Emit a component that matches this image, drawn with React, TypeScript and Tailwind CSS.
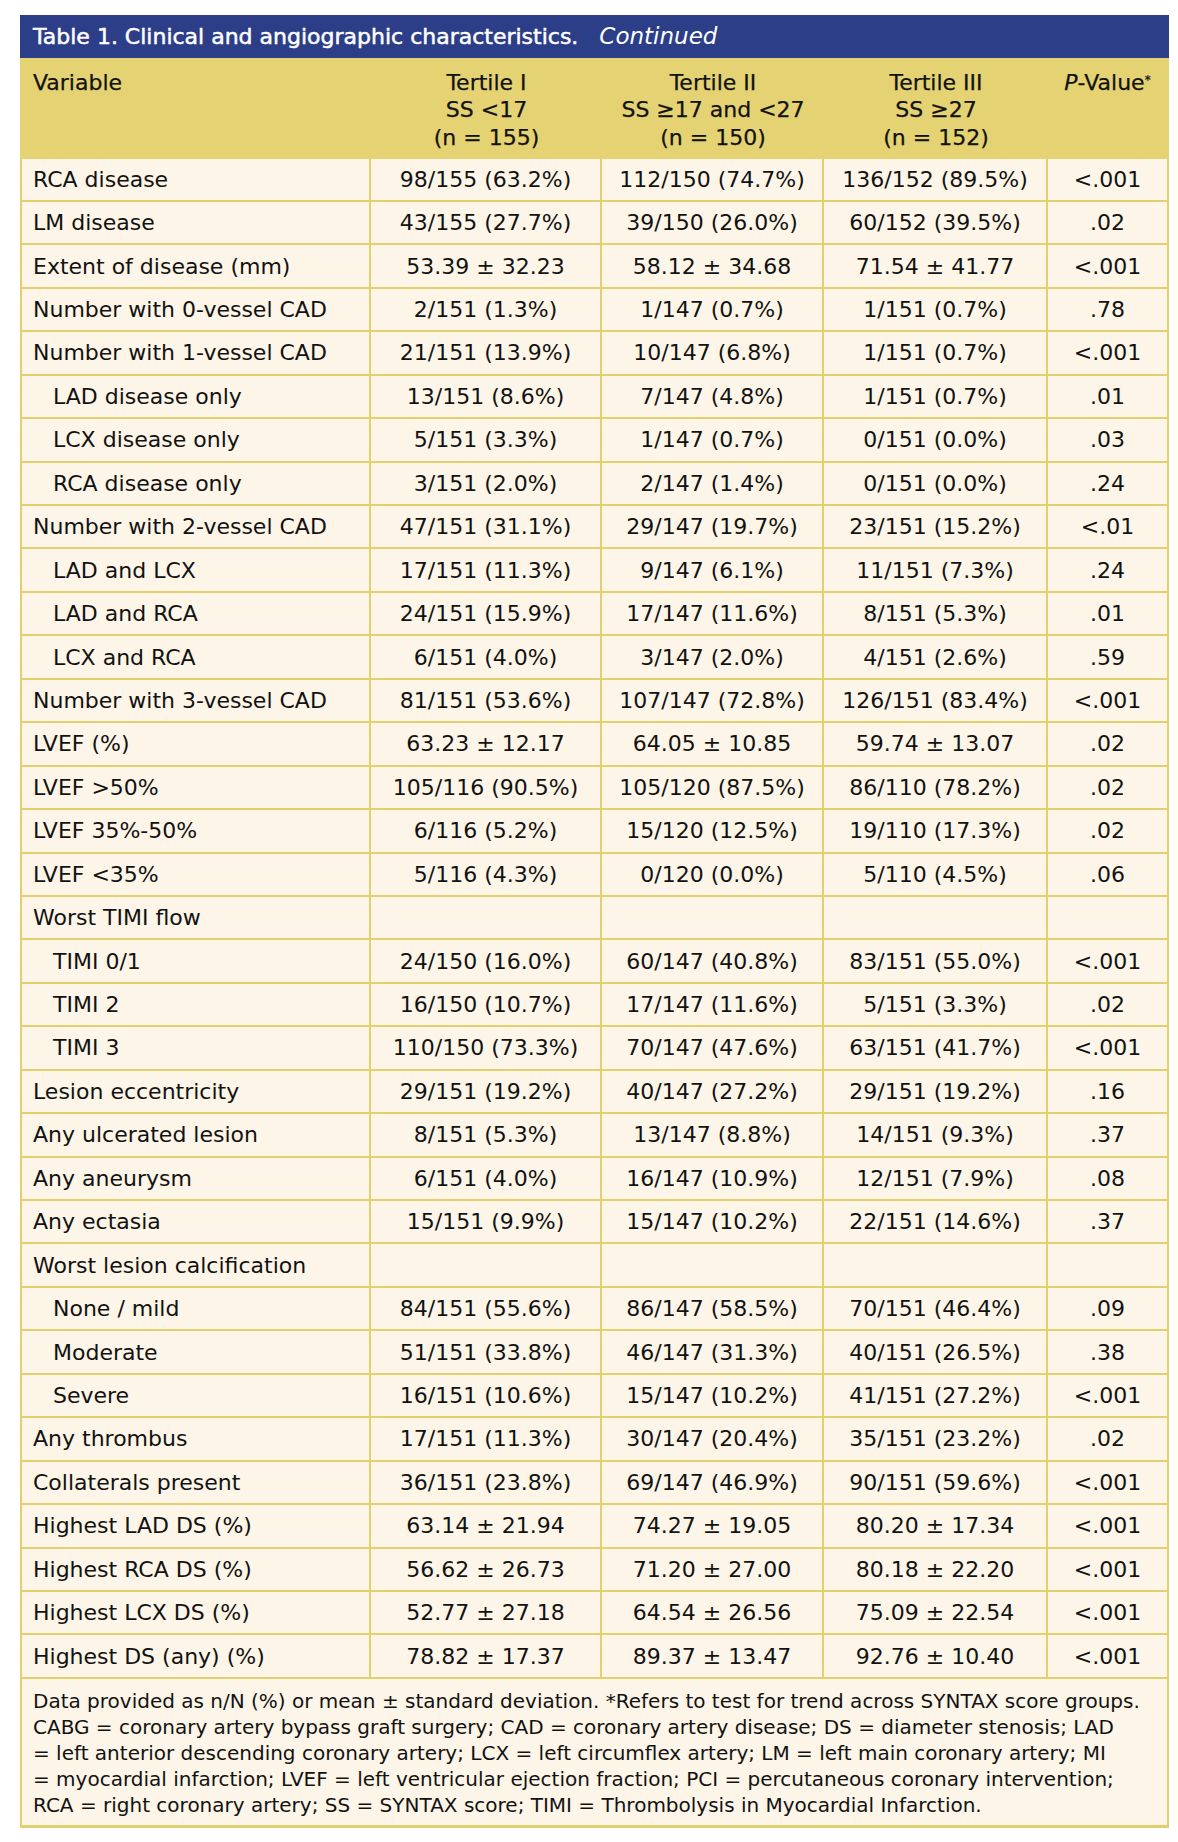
import React from 'react';

type Row = [string, string, string, string, string, boolean?];

const rows: Row[] = [
    ['RCA disease', '98/155 (63.2%)', '112/150 (74.7%)', '136/152 (89.5%)', '<.001'],
    ['LM disease', '43/155 (27.7%)', '39/150 (26.0%)', '60/152 (39.5%)', '.02'],
    ['Extent of disease (mm)', '53.39 ± 32.23', '58.12 ± 34.68', '71.54 ± 41.77', '<.001'],
    ['Number with 0-vessel CAD', '2/151 (1.3%)', '1/147 (0.7%)', '1/151 (0.7%)', '.78'],
    ['Number with 1-vessel CAD', '21/151 (13.9%)', '10/147 (6.8%)', '1/151 (0.7%)', '<.001'],
    ['LAD disease only', '13/151 (8.6%)', '7/147 (4.8%)', '1/151 (0.7%)', '.01', true],
    ['LCX disease only', '5/151 (3.3%)', '1/147 (0.7%)', '0/151 (0.0%)', '.03', true],
    ['RCA disease only', '3/151 (2.0%)', '2/147 (1.4%)', '0/151 (0.0%)', '.24', true],
    ['Number with 2-vessel CAD', '47/151 (31.1%)', '29/147 (19.7%)', '23/151 (15.2%)', '<.01'],
    ['LAD and LCX', '17/151 (11.3%)', '9/147 (6.1%)', '11/151 (7.3%)', '.24', true],
    ['LAD and RCA', '24/151 (15.9%)', '17/147 (11.6%)', '8/151 (5.3%)', '.01', true],
    ['LCX and RCA', '6/151 (4.0%)', '3/147 (2.0%)', '4/151 (2.6%)', '.59', true],
    ['Number with 3-vessel CAD', '81/151 (53.6%)', '107/147 (72.8%)', '126/151 (83.4%)', '<.001'],
    ['LVEF (%)', '63.23 ± 12.17', '64.05 ± 10.85', '59.74 ± 13.07', '.02'],
    ['LVEF >50%', '105/116 (90.5%)', '105/120 (87.5%)', '86/110 (78.2%)', '.02'],
    ['LVEF 35%-50%', '6/116 (5.2%)', '15/120 (12.5%)', '19/110 (17.3%)', '.02'],
    ['LVEF <35%', '5/116 (4.3%)', '0/120 (0.0%)', '5/110 (4.5%)', '.06'],
    ['Worst TIMI flow', '', '', '', ''],
    ['TIMI 0/1', '24/150 (16.0%)', '60/147 (40.8%)', '83/151 (55.0%)', '<.001', true],
    ['TIMI 2', '16/150 (10.7%)', '17/147 (11.6%)', '5/151 (3.3%)', '.02', true],
    ['TIMI 3', '110/150 (73.3%)', '70/147 (47.6%)', '63/151 (41.7%)', '<.001', true],
    ['Lesion eccentricity', '29/151 (19.2%)', '40/147 (27.2%)', '29/151 (19.2%)', '.16'],
    ['Any ulcerated lesion', '8/151 (5.3%)', '13/147 (8.8%)', '14/151 (9.3%)', '.37'],
    ['Any aneurysm', '6/151 (4.0%)', '16/147 (10.9%)', '12/151 (7.9%)', '.08'],
    ['Any ectasia', '15/151 (9.9%)', '15/147 (10.2%)', '22/151 (14.6%)', '.37'],
    ['Worst lesion calcification', '', '', '', ''],
    ['None / mild', '84/151 (55.6%)', '86/147 (58.5%)', '70/151 (46.4%)', '.09', true],
    ['Moderate', '51/151 (33.8%)', '46/147 (31.3%)', '40/151 (26.5%)', '.38', true],
    ['Severe', '16/151 (10.6%)', '15/147 (10.2%)', '41/151 (27.2%)', '<.001', true],
    ['Any thrombus', '17/151 (11.3%)', '30/147 (20.4%)', '35/151 (23.2%)', '.02'],
    ['Collaterals present', '36/151 (23.8%)', '69/147 (46.9%)', '90/151 (59.6%)', '<.001'],
    ['Highest LAD DS (%)', '63.14 ± 21.94', '74.27 ± 19.05', '80.20 ± 17.34', '<.001'],
    ['Highest RCA DS (%)', '56.62 ± 26.73', '71.20 ± 27.00', '80.18 ± 22.20', '<.001'],
    ['Highest LCX DS (%)', '52.77 ± 27.18', '64.54 ± 26.56', '75.09 ± 22.54', '<.001'],
    ['Highest DS (any) (%)', '78.82 ± 17.37', '89.37 ± 13.47', '92.76 ± 10.40', '<.001'],
];

const footnote = [
    'Data provided as n/N (%) or mean ± standard deviation. *Refers to test for trend across SYNTAX score groups.',
    'CABG = coronary artery bypass graft surgery; CAD = coronary artery disease; DS = diameter stenosis; LAD',
    '= left anterior descending coronary artery; LCX = left circumflex artery; LM = left main coronary artery; MI',
    '= myocardial infarction; LVEF = left ventricular ejection fraction; PCI = percutaneous coronary intervention;',
    'RCA = right coronary artery; SS = SYNTAX score; TIMI = Thrombolysis in Myocardial Infarction.',
];

const cols = 'grid grid-cols-[349px_231px_222px_224px_1fr]';

const App: React.FC = () => {
    return (
        <div className="min-h-[1842px] bg-white pt-[15px] pl-[20px] font-['DejaVu_Sans',sans-serif] text-[#121212]">
            <div className="w-[1149px]">
                {/* Title bar */}
                <div className="flex h-[42.5px] items-center gap-[21px] bg-[#2c3e88] pl-[13px] text-white">
                    <span className="text-[22px] [-webkit-text-stroke:0.5px_white]">Table 1. Clinical and angiographic characteristics.</span>
                    <span className="text-[23px] italic">Continued</span>
                </div>

                {/* Column header */}
                <div className={`${cols} h-[101px] border-x-2 border-[#e4d273] bg-[#e4d273] pt-[11px] text-[22px] leading-[27.5px] [-webkit-text-stroke:0.25px_#121212]`}>
                    <div className="pl-[11px]">Variable</div>
                    <div className="text-center">Tertile I<br />SS &lt;17<br />(n = 155)</div>
                    <div className="text-center">Tertile II<br />SS ≥17 and &lt;27<br />(n = 150)</div>
                    <div className="text-center">Tertile III<br />SS ≥27<br />(n = 152)</div>
                    <div className="text-center"><i>P</i>-Value<sup className="text-[12px]">*</sup></div>
                </div>

                {/* Body rows */}
                {rows.map(([label, t1, t2, t3, p, indent]) => (
                    <div
                        key={label}
                        className={`${cols} h-[43.45px] border-x-2 border-b-2 border-[#e3cf6d] bg-[#fdf5e7] text-[22px]`}
                    >
                        <div className={`flex items-center border-r-2 border-[#e3cf6d] ${indent ? 'pl-[31px]' : 'pl-[11px]'}`}>{label}</div>
                        <div className="flex items-center justify-center border-r-2 border-[#e3cf6d]">{t1}</div>
                        <div className="flex items-center justify-center border-r-2 border-[#e3cf6d]">{t2}</div>
                        <div className="flex items-center justify-center border-r-2 border-[#e3cf6d]">{t3}</div>
                        <div className="flex items-center justify-center">{p}</div>
                    </div>
                ))}

                {/* Footnote */}
                <div className="border-x-2 border-b-[3px] border-[#e3cf6d] bg-[#fdf5e7] px-[11px] pt-[9px] pb-[7px] text-[20px] leading-[26px]">
                    {footnote.map((line) => (
                        <div key={line} className="whitespace-nowrap">{line}</div>
                    ))}
                </div>
            </div>
        </div>
    );
};

export default App;
